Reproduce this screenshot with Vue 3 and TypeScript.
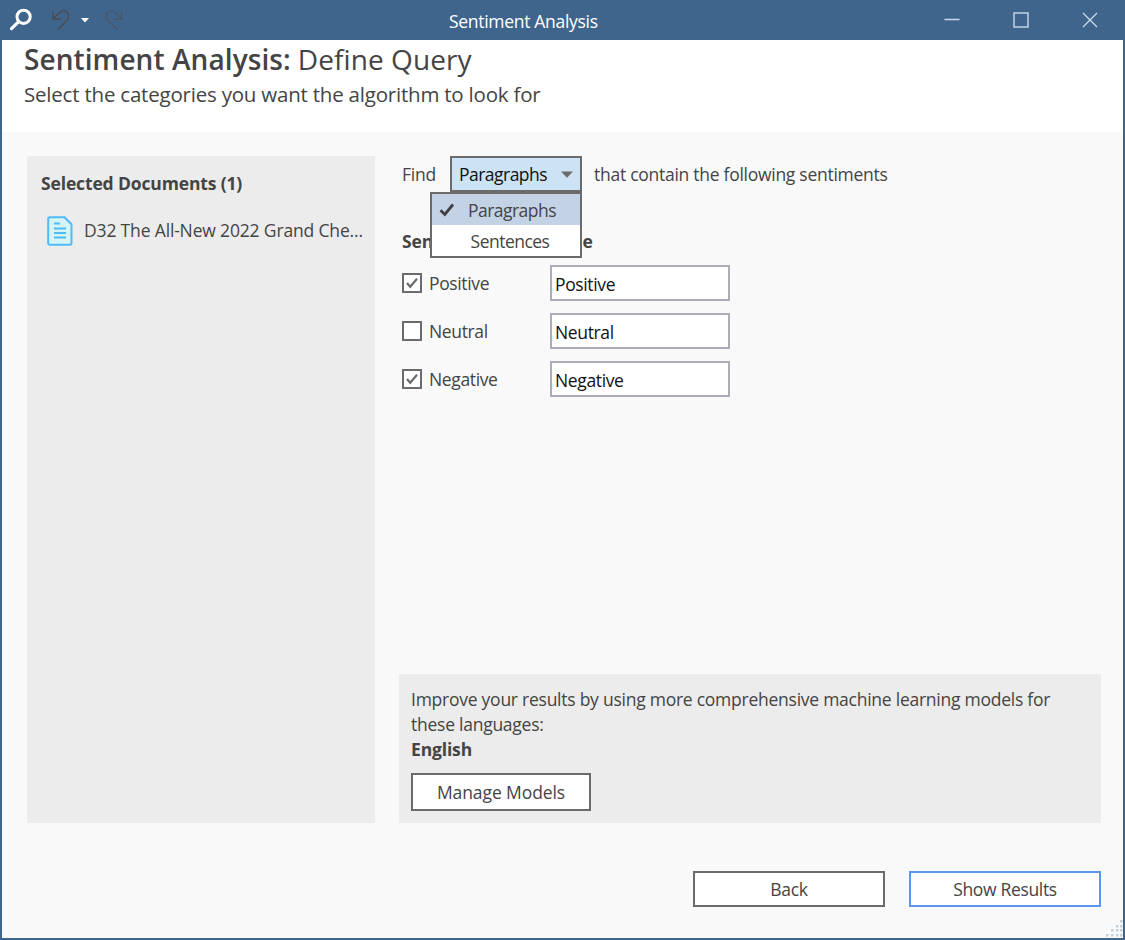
<script setup lang="ts">
import { ref } from 'vue'

interface Sentiment {
  name: string
  checked: boolean
  code: string
}

const units = ['Paragraphs', 'Sentences']
const unit = ref('Paragraphs')
const menuOpen = ref(true)

const sentiments = ref<Sentiment[]>([
  { name: 'Positive', checked: true, code: 'Positive' },
  { name: 'Neutral', checked: false, code: 'Neutral' },
  { name: 'Negative', checked: true, code: 'Negative' },
])

const gripDots = [
  [14, 0], [10, 5], [14, 5], [5, 9], [10, 9], [14, 9], [0, 14], [5, 14], [10, 14], [14, 14],
]

function choose(value: string): void {
  unit.value = value
  menuOpen.value = false
}
</script>

<template>
  <div class="window">
    <header class="titlebar">
      <div class="tools">
        <svg class="logo" width="24" height="24" viewBox="0 0 24 24">
          <circle cx="14.6" cy="8.800" r="6.600" fill="none" stroke="#fff" stroke-width="3" />
          <path d="M9.600 13.600 2.500 20.600" fill="none" stroke="#fff" stroke-width="3.200" stroke-linecap="round" />
        </svg>
        <svg class="undo" width="20" height="22" viewBox="0 0 20 22">
          <path d="M2 2v8h8M2.400 9.400 9 3.200C12.500 .4 17.500 2.200 17.500 7.200c0 2-.7 3.200-2 4.600L7.200 20.500" fill="none" stroke="#4a4a50" stroke-width="1.300" />
        </svg>
        <svg class="caret" width="8" height="5" viewBox="0 0 8 5"><path d="M0 0h8L4 4.500z" fill="#fff" /></svg>
        <svg class="redo" width="20" height="22" viewBox="0 0 20 22">
          <path d="M17.500 2v8h-8M17 9.400 11.500 3.600C8 .4 2 2.600 2 7.400c0 1.800.7 3 2 4.400L13.500 20.500" fill="none" stroke="#4a5461" stroke-width="1.150" />
        </svg>
      </div>
      <span class="caption">Sentiment Analysis</span>
      <div class="controls">
        <svg width="16" height="16" viewBox="0 0 16 16"><path d="M.5 7.500h15" stroke="#c9d9ea" stroke-width="1.500" /></svg>
        <svg width="16" height="16" viewBox="0 0 16 16"><path d="M1 1h14v14H1z" fill="none" stroke="#c3d2e4" stroke-width="1.500" /></svg>
        <svg width="16" height="16" viewBox="0 0 16 16"><path d="m1 1 14 14M15 1 1 15" stroke="#c9d9ea" stroke-width="1.300" /></svg>
      </div>
    </header>

    <section class="heading">
      <h1><strong>Sentiment Analysis:</strong><span class="step">Define Query</span></h1>
      <p>Select the categories you want the algorithm to look for</p>
    </section>

    <main class="content">
      <aside class="documents">
        <h2>Selected Documents (1)</h2>
        <div class="document">
          <svg width="26" height="30" viewBox="0 0 26 30">
            <path d="M3 1.200h14.500l7 7V27a1.800 1.800 0 0 1-1.800 1.800H3A1.800 1.800 0 0 1 1.200 27V3A1.800 1.800 0 0 1 3 1.200z" fill="#d5f4f8" stroke="#4fbcf7" stroke-width="2" />
            <path d="M7 7.500h6M7 12.500h12M7 17h12M7 21.500h12" stroke="#4fbcf7" stroke-width="1.800" />
          </svg>
          <span>D32 The All-New 2022 Grand Che...</span>
        </div>
      </aside>

      <section class="query">
        <div class="find">
          <span class="find-label">Find</span>
          <div class="picker">
            <button class="select" type="button" @click="menuOpen = !menuOpen">
              <span>{{ unit }}</span>
              <svg width="12" height="7" viewBox="0 0 12 7"><path d="M0 .5h12L6 6.700z" fill="#6b6b6b" /></svg>
            </button>
            <ul v-if="menuOpen" class="menu">
              <li v-for="item in units" :key="item" :class="{ active: item === unit }" @click="choose(item)">
                <svg v-if="item === unit" class="tick" width="16" height="14" viewBox="0 0 16 14">
                  <path d="M1.500 7.300 5.800 11.500 14 1.500" fill="none" stroke="#3f4044" stroke-width="2.800" />
                </svg>
                <span>{{ item }}</span>
              </li>
            </ul>
          </div>
          <span class="find-rest">that contain the following sentiments</span>
        </div>

        <div class="columns">
          <span>Sentiment</span>
          <span class="code-head">Code</span>
        </div>
        <div v-for="row in sentiments" :key="row.name" class="row">
          <button class="check" type="button" @click="row.checked = !row.checked">
            <svg v-if="row.checked" width="12" height="12" viewBox="0 0 12 12">
              <path d="M1 6 4.200 9.800 11 1.700" fill="none" stroke="#6b6b6b" stroke-width="2.200" />
            </svg>
          </button>
          <span class="name">{{ row.name }}</span>
          <input v-model="row.code" class="field" type="text" />
        </div>

        <div class="models">
          <p>Improve your results by using more comprehensive machine learning models for</p>
          <p>these languages:</p>
          <p class="language">English</p>
          <button class="button manage" type="button">Manage Models</button>
        </div>
      </section>
    </main>

    <footer class="actions">
      <button class="button" type="button">Back</button>
      <button class="button primary" type="button">Show Results</button>
    </footer>

    <svg class="grip" width="17" height="17" viewBox="0 0 17 17">
      <rect v-for="(dot, i) in gripDots" :key="i" :x="dot[0]" :y="dot[1]" width="2.500" height="2.500" fill="#c3d1dc" />
    </svg>
  </div>
</template>

<style>
body {
  margin: 0;
}
</style>

<style scoped>
* {
  box-sizing: border-box;
}

.window {
  position: relative;
  display: flex;
  flex-direction: column;
  width: 1125px;
  height: 940px;
  overflow: hidden;
  border: 2px solid #40658c;
  border-top: 0;
  background: #f9f9f9;
  color: #444;
  font-family: "Open Sans", "Noto Sans", sans-serif;
  font-size: 17.5px;
  line-height: 25px;
  letter-spacing: -0.25px;
  white-space: nowrap;
}

h1, h2, p, ul {
  margin: 0;
  padding: 0;
}

button, input {
  font: inherit;
  letter-spacing: inherit;
  color: inherit;
}

svg {
  display: block;
  flex: none;
}

.titlebar {
  display: grid;
  grid-template-columns: 447px 1fr auto;
  align-items: center;
  flex: none;
  height: 40px;
  margin: 0 -2px;
  padding: 0 27px 0 2px;
  background: #40658c;
  color: #fff;
}

.tools {
  display: flex;
  align-items: center;
  padding-left: 7px;
}

.undo {
  margin-left: 18px;
}

.caret {
  margin-left: 10px;
}

.redo {
  margin-left: 15px;
}

.caption {
  padding-top: 3px;
  letter-spacing: -0.3px;
}

.controls {
  display: flex;
  gap: 53px;
}

.heading {
  flex: none;
  height: 92px;
  padding-left: 22px;
  background: #fff;
}

h1 {
  display: flex;
  gap: 7px;
  height: 39px;
  font-size: 28px;
  font-weight: 400;
  line-height: 38px;
  letter-spacing: 0.08px;
}

h1 strong {
  font-weight: 600;
}

.heading p {
  height: 30px;
  font-size: 20.5px;
  line-height: 30px;
  letter-spacing: -0.21px;
}

.content {
  display: flex;
  flex: none;
  gap: 24px;
  height: 691px;
  padding: 24px 22px 0 25px;
}

.documents {
  flex: none;
  width: 348px;
  padding: 15px 0 0 14px;
  background: #ececec;
}

h2 {
  font-size: 17.5px;
  font-weight: 700;
  line-height: 25px;
  letter-spacing: -0.14px;
}

.document {
  display: flex;
  gap: 11px;
  align-items: center;
  margin-top: 20px;
  padding-left: 6px;
  letter-spacing: -0.16px;
}

.document span {
  padding-bottom: 2px;
}

.query {
  display: flex;
  flex: 1;
  flex-direction: column;
}

.find {
  display: flex;
  height: 36px;
  padding-left: 3px;
  line-height: 37px;
}

.find-label {
  width: 48px;
}

.picker {
  position: relative;
  letter-spacing: -0.52px;
}

.select {
  display: flex;
  align-items: center;
  justify-content: space-between;
  width: 132px;
  height: 36px;
  padding: 1px 7px 0;
  border: 2px solid #6b6b6b;
  background: #cce2f5;
  color: #111;
}

.menu {
  position: absolute;
  top: 36px;
  right: 0;
  z-index: 2;
  width: 152px;
  height: 66px;
  border: 2px solid #6b6b6b;
  background: #fff;
  line-height: 31px;
  list-style: none;
}

.menu li {
  position: relative;
  height: 31px;
  padding: 1px 0 0 12px;
  text-align: center;
}

.menu li:last-child {
  padding-left: 8px;
}

.menu li.active {
  background: #c3d3e5;
}

.tick {
  position: absolute;
  top: 9px;
  left: 7px;
}

.find-rest {
  margin-left: 12px;
  letter-spacing: -0.27px;
}

.columns {
  display: flex;
  height: 25px;
  margin-top: 37px;
  padding-left: 3px;
  font-weight: 700;
  letter-spacing: -0.15px;
}

.columns span:first-child {
  width: 148px;
}

.row {
  display: flex;
  align-items: center;
  height: 36px;
  margin-bottom: 12px;
  padding-left: 3px;
  letter-spacing: -0.36px;
}

.columns + .row {
  margin-top: 11px;
}

.check {
  display: grid;
  place-items: center;
  width: 20px;
  height: 20px;
  padding: 0;
  border: 2px solid #6b6b6b;
  background: #fff;
}

.name {
  width: 121px;
  margin-left: 7px;
}

.field {
  width: 180px;
  height: 36px;
  padding: 2px 3px 0;
  border: 2px solid #abadb3;
  border-radius: 0;
  outline: 0;
  background: #fff;
  color: #111;
}

.models {
  height: 149px;
  margin-top: auto;
  padding: 13px 12px 0;
  background: #ececec;
}

.language {
  font-weight: 700;
  letter-spacing: -0.15px;
}

.button {
  width: 192px;
  height: 36px;
  padding: 1px 0 0;
  border: 2px solid #6b6b6b;
  background: #fff;
}

.button.manage {
  display: block;
  width: 180px;
  height: 38px;
  margin-top: 11px;
  letter-spacing: -0.1px;
}

.button.primary {
  border-color: #5b96ef;
  letter-spacing: -0.33px;
}

.actions {
  display: flex;
  gap: 24px;
  justify-content: flex-end;
  padding: 48px 22px 0 0;
}

.grip {
  position: absolute;
  right: 0;
  bottom: 1px;
}
</style>
